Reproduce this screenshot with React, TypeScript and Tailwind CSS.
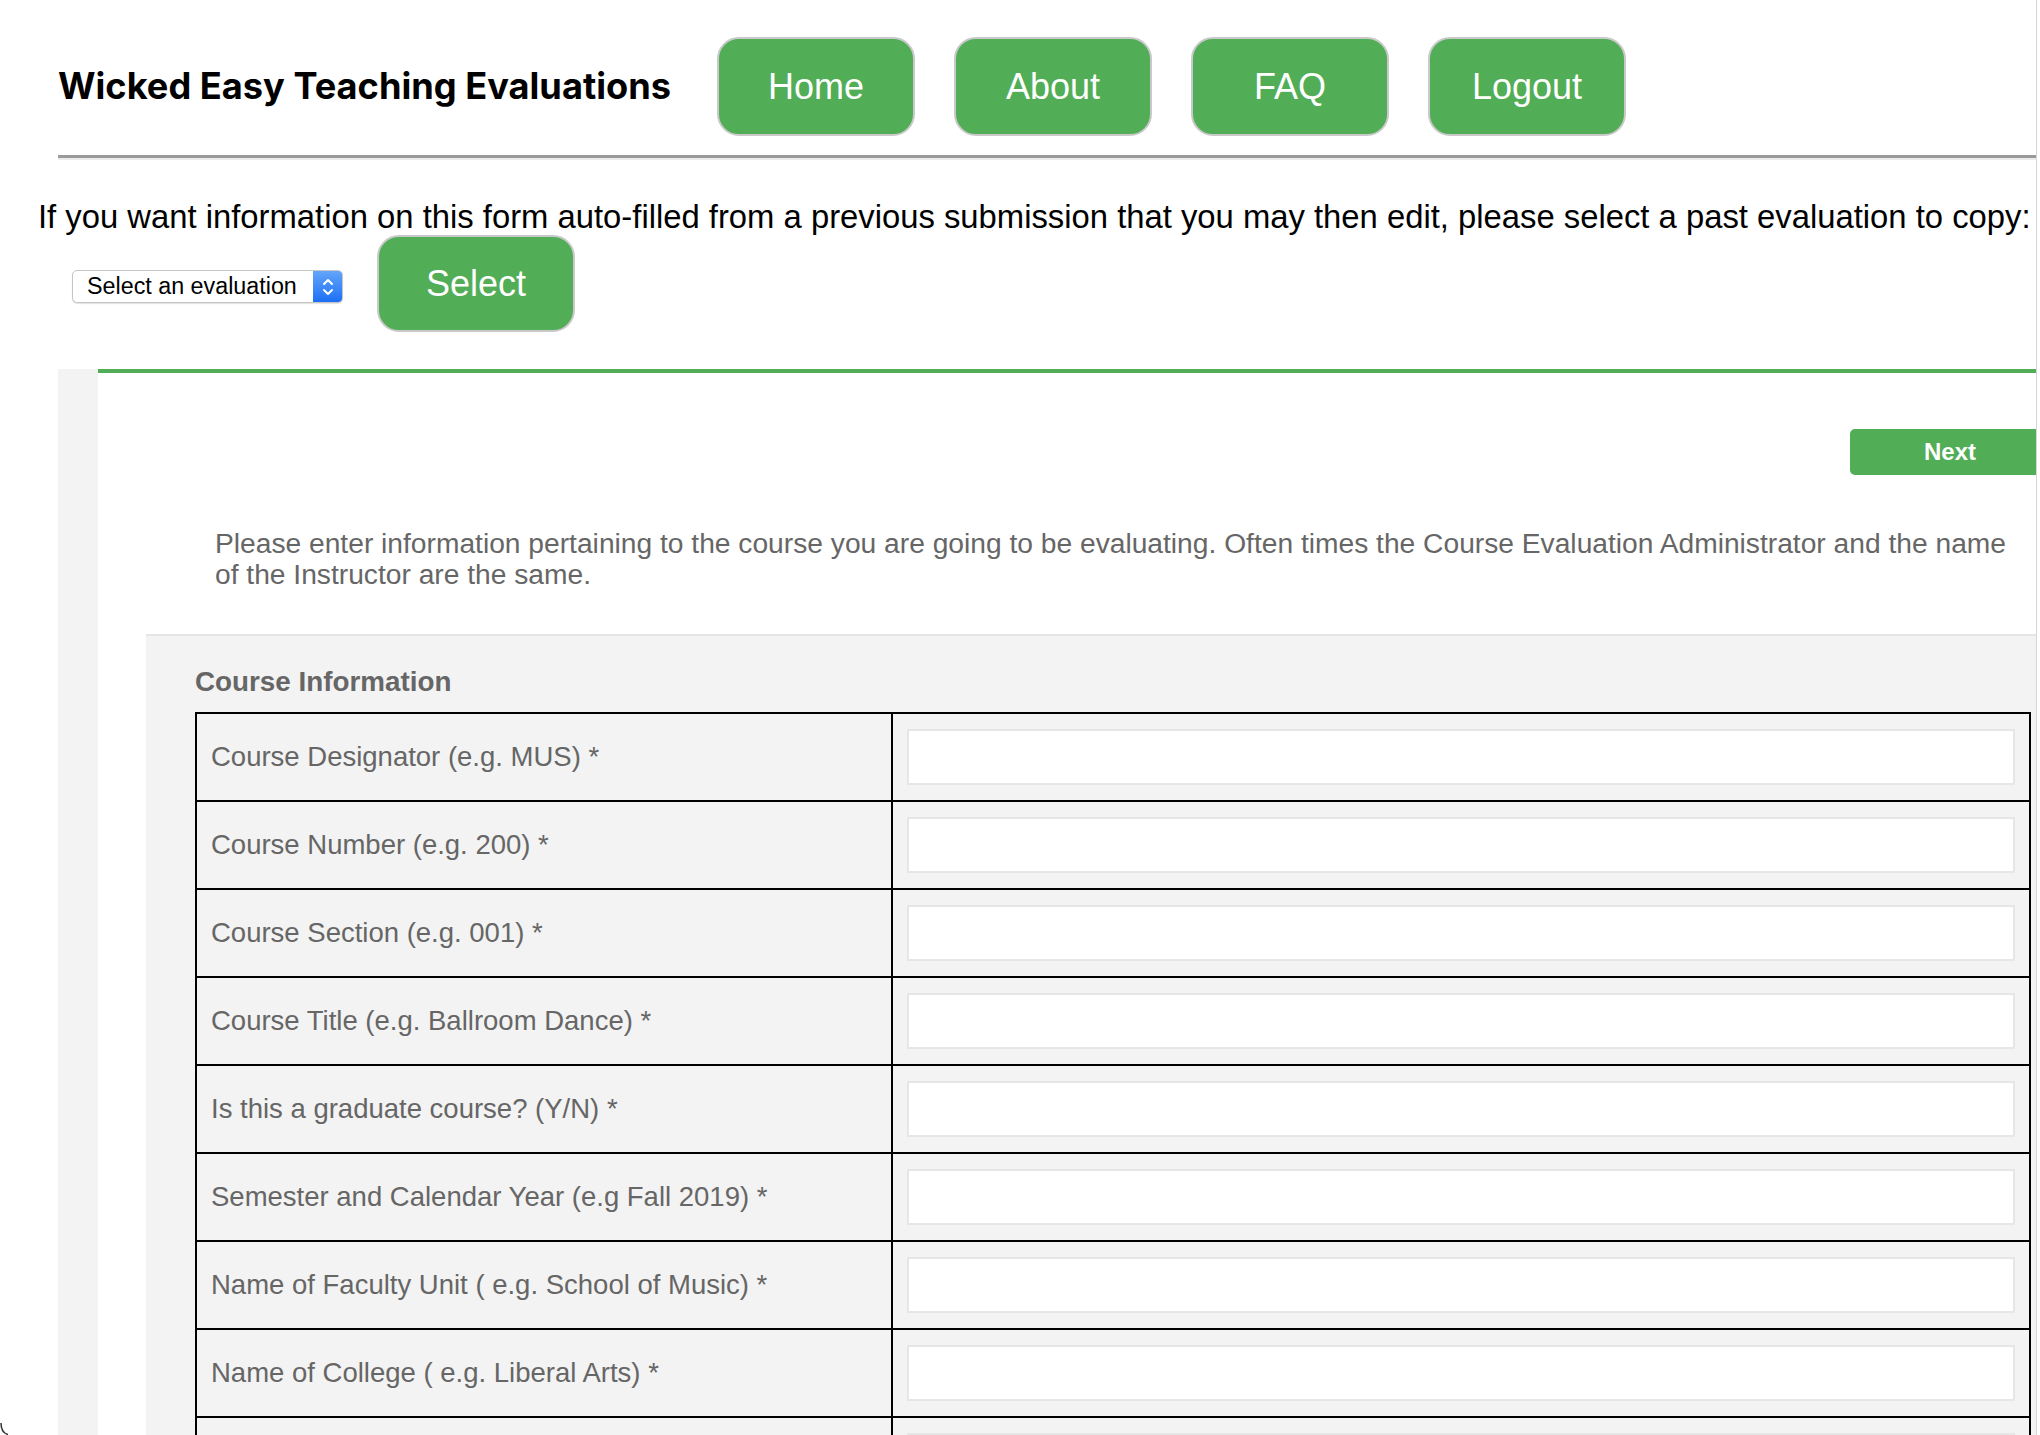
export default function App() {
  const nav = ["Home", "About", "FAQ", "Logout"];
  const rows = [
    "Course Designator (e.g. MUS) *",
    "Course Number (e.g. 200) *",
    "Course Section (e.g. 001) *",
    "Course Title (e.g. Ballroom Dance) *",
    "Is this a graduate course? (Y/N) *",
    "Semester and Calendar Year (e.g Fall 2019) *",
    "Name of Faculty Unit ( e.g. School of Music) *",
    "Name of College ( e.g. Liberal Arts) *",
    "",
  ];
  return (
    <div className="relative w-[2040px] h-[1435px] overflow-hidden bg-white font-['Liberation_Sans',Arial,sans-serif]">
      <div className="w-[2037px] h-full border-r border-[#d6d6d6] flex flex-col">
        {/* header */}
        <div className="flex items-center pl-[58px] pt-[37px]">
          <div className="w-[659px] text-[36.2px] font-bold text-black font-['Inter',sans-serif]">
            Wicked Easy Teaching Evaluations
          </div>
          <div className="flex gap-[39px]">
            {nav.map((n) => (
              <button
                key={n}
                className="w-[198px] h-[99px] rounded-[22px] bg-[#51ad56] border-2 border-[#c9c9c9] text-white text-[36px]"
              >
                {n}
              </button>
            ))}
          </div>
        </div>
        <div className="ml-[58px] mt-[19px] h-0 border-t-[3px] border-t-[#9a9a9a] border-b-2 border-b-[#ececec]" />

        <p className="mt-[39px] pl-[38px] text-[32.8px] leading-[36px] whitespace-nowrap text-black">
          If you want information on this form auto-filled from a previous submission that you may then edit, please select a past evaluation to copy:
        </p>

        <div className="flex items-center pl-[72px] gap-[34px]">
          <div className="mt-[6px] w-[271px] h-[33px] flex rounded-[5px] border border-[#c6c6c6] bg-white shadow-[0_1px_1px_rgba(0,0,0,0.12)] overflow-hidden">
            <div className="flex-1 flex items-center pl-[14px] text-[23.3px] text-black whitespace-nowrap">Select an evaluation</div>
            <div className="w-[29px] h-full bg-gradient-to-b from-[#63a5fa] to-[#1b6ef5] flex items-center justify-center">
              <svg width="14" height="22" viewBox="0 0 14 22" fill="none" stroke="white" strokeWidth="2" strokeLinecap="round" strokeLinejoin="round">
                <path d="M3 8 L7 4 L11 8" />
                <path d="M3 14 L7 18 L11 14" />
              </svg>
            </div>
          </div>
          <button className="w-[198px] h-[97px] rounded-[22px] bg-[#51ad56] border-2 border-[#c9c9c9] text-white text-[36px]">
            Select
          </button>
        </div>

        <div className="mt-[37px] flex flex-1 min-h-0">
          <div className="ml-[58px] w-[40px] bg-[#f3f3f3]" />
          <div className="flex-1 min-w-0 border-t-4 border-[#51ad56] bg-white overflow-hidden flex flex-col">
            <div className="flex justify-end pt-[56px]">
              <button className="w-[200px] h-[46px] -mr-[14px] rounded-l-[5px] bg-[#51ad56] text-white text-[24px] font-bold">
                Next
              </button>
            </div>
            <p className="mt-[53px] pl-[117px] text-[28.2px] leading-[31px] text-[#666] whitespace-nowrap">
              Please enter information pertaining to the course you are going to be evaluating. Often times the Course Evaluation Administrator and the name
              <br />
              of the Instructor are the same.
            </p>
            <div className="mt-[44px] ml-[48px] flex-1 border-t-2 border-[#e6e6e6] bg-[#f3f3f3] pl-[49px] pt-[30px]">
              <div className="text-[27.8px] leading-[32px] font-bold text-[#666]">Course Information</div>
              <div className="mt-[14px] w-[1836px] border-t-2 border-l-2 border-black">
                {rows.map((r, i) => (
                  <div key={i} className="grid grid-cols-[696px_1fr] h-[88px]">
                    <div className="border-r-2 border-b-2 border-black flex items-center pl-[14px] text-[27.5px] text-[#666] whitespace-nowrap">
                      {r}
                    </div>
                    <div className="border-r-2 border-b-2 border-black pl-[14px] pr-[14px] pt-[15px]">
                      <div className="h-[56px] bg-white border-2 border-[#e6e6e6]" />
                    </div>
                  </div>
                ))}
              </div>
            </div>
          </div>
        </div>
      </div>
      <svg className="absolute left-0 bottom-0" width="12" height="12" viewBox="0 0 12 12" fill="none">
        <path d="M1 0 Q1 10 8 11.5" stroke="#333" strokeWidth="1.5" />
      </svg>
    </div>
  );
}
